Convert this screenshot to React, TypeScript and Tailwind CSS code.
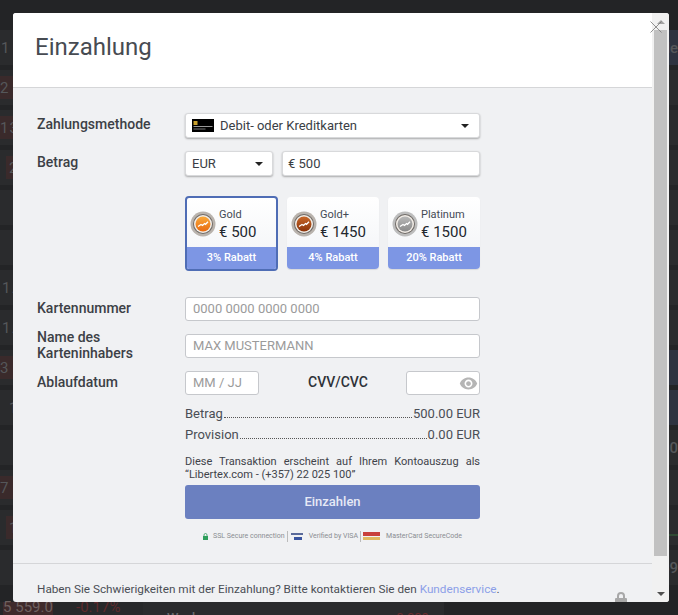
const backdropRows = [
  { left: '1 8', pl: 'pl-[1px]', red: false, right: 'bg-[#2e3340]', rightText: 'de' },
  { left: '2 1', pl: 'pl-0', red: true, right: 'bg-[#2a2b2d]', rightText: '' },
  { left: '13', pl: 'pl-0', red: true, right: 'bg-[#2a2b2d]', rightText: '' },
  { left: '2', pl: 'pl-[9px]', red: false, inset: true, right: 'bg-[#2a2b2d]', rightText: '' },
  { left: '', pl: '', red: false, right: 'bg-[#2a2b2d]', rightText: '' },
  { left: '', pl: '', red: false, right: 'bg-[#2a2b2d]', rightText: '' },
  { left: '1.', pl: 'pl-[2px]', red: false, right: 'bg-[#2a2b2d]', rightText: '' },
  { left: '1.', pl: 'pl-[2px]', red: false, right: 'bg-[#2a2b2d]', rightText: '' },
  { left: '3 6', pl: 'pl-0', red: true, right: 'bg-[#2e3340]', rightText: '' },
  { left: '1', pl: 'pl-[9px]', red: false, right: 'bg-[#2e3340]', rightText: '' },
  { left: '', pl: '', red: false, right: 'bg-[#2a2b2d]', rightText: '10' },
  { left: '7 2', pl: 'pl-0', red: true, right: 'bg-[#2a2b2d]', rightText: '' },
  { left: '1', pl: 'pl-[9px]', red: false, inset: true, right: 'bg-[#2a2b2d]', rightText: '' },
  { left: '', pl: '', red: false, right: 'bg-[#2a2b2d]', rightText: '59' },
]

function Medal({ id, from, to, ring }: { id: string; from: string; to: string; ring: string }) {
  return (
    <svg width="26" height="26" viewBox="0 0 26 26" className="shrink-0 mt-[3px]">
      <defs>
        <linearGradient id={id} x1="0" y1="0" x2="0" y2="1">
          <stop offset="0" stopColor={from} />
          <stop offset="1" stopColor={to} />
        </linearGradient>
      </defs>
      <circle cx="13" cy="13" r="12.5" fill={ring} />
      <circle cx="13" cy="13" r="10" fill="#6f6a66" />
      <circle cx="13" cy="13" r="9" fill="#f1ece6" />
      <circle cx="13" cy="13" r="7.5" fill={`url(#${id})`} />
      <path d="M8 15.5l3-2 1.5 1 2-2 1 .8 2.5-2.6" fill="none" stroke="#fff" strokeWidth="1.3" />
    </svg>
  )
}

function Card({ name, price, off, medal, selected }: {
  name: string; price: string; off: string
  medal: { id: string; from: string; to: string; ring: string }
  selected?: boolean
}) {
  return (
    <div className={`flex flex-col rounded-[4px] overflow-hidden bg-gradient-to-b from-white to-[#f1f3f6] ${
      selected ? 'w-[93px] h-[75px] border-2 border-[#4f6db5]' : 'w-[92px] h-[72px] mt-[1px] shadow-[0_1px_1px_rgba(0,0,0,0.1)]'
    }`}>
      <div className={`shrink-0 flex items-center gap-[3px] ${selected ? 'h-[49px] pl-[3px]' : 'h-[50px] pt-[1px] pl-[4px]'}`}>
        <Medal {...medal} />
        <div className="flex flex-col pt-[5px]">
          <span className="text-[11px] leading-[13px] text-[#444a55]">{name}</span>
          <span className="text-[15px] leading-[22px] text-[#23272e]">{price}</span>
        </div>
      </div>
      <div className="h-[22px] bg-[#7d96e4] text-white text-[11px] font-medium flex items-center justify-center">
        {off}
      </div>
    </div>
  )
}

function Field({ placeholder, className }: { placeholder: string; className?: string }) {
  return (
    <div className={`h-[24px] bg-white border border-[#c6c8cc] rounded-[3px] px-[7px] flex items-center text-[13px] text-[#9b9b9b] ${className ?? ''}`}>
      {placeholder}
    </div>
  )
}

function Caret() {
  return <span className="w-0 h-0 border-x-[4px] border-x-transparent border-t-[4px] border-t-[#222]" />
}

function Label({ children }: { children: React.ReactNode }) {
  return <div className="w-[150px] shrink-0 pl-[2px] pb-[2px] text-[14px] font-medium text-[#3c4046] leading-[16px]">{children}</div>
}

function LeaderRow({ label, value }: { label: string; value: string }) {
  return (
    <div className="flex items-baseline text-[13px] text-[#4a4e55] leading-[15px] h-[21px]">
      <span>{label}</span>
      <span className="flex-1 border-b border-dotted border-[#555] mx-[1px]" />
      <span>{value}</span>
    </div>
  )
}

export default function App() {
  return (
    <div className="relative w-[678px] h-[615px] overflow-hidden bg-[#232426] font-['Roboto',sans-serif]">
      {/* Trading page behind the dialog */}
      <div className="flex flex-col pt-[25px]">
        {backdropRows.map((r, i) => (
          <div key={i} className="flex justify-between h-[35px] mt-[5px] bg-[#2a2b2d] text-[15px] leading-[20px] text-[#55575a]">
            <div className={`w-[40px] py-[6px] ${r.inset ? 'pl-[6px]' : ''}`}>
              <div className={`h-[23px] flex items-center tracking-[1px] ${r.inset ? 'pl-[3px] bg-[#3a2a2b]' : r.pl} ${r.red ? 'bg-[#3a2a2b]' : ''}`}>
                {r.left}
              </div>
            </div>
            <div className={`w-[40px] flex justify-end pr-0 items-center font-medium ${r.right}`}>{r.rightText}</div>
          </div>
        ))}
      </div>
      <div className="absolute left-0 bottom-0 w-full h-[13px] flex bg-[#232426] text-[15px]">
        <div className="w-[143px] flex items-start bg-[#27282a] leading-[11px]">
          <span className="ml-[3px] w-[50px] h-[13px] bg-[#3f2a2b] text-[#6f6160] text-center">5 559.0</span>
          <span className="ml-[23px] text-[#5f2a2c]">-0.17%</span>
        </div>
        <div className="w-[301px] bg-[#2a2b2d] flex pl-[24px] text-[13px] font-medium leading-[15px] pt-[8px]">
          <span className="text-[#6a6c6f]">Wach</span>
          <span className="ml-[197px] text-[#6a2c2e] font-normal">0.009</span>
        </div>
      </div>
      <div className="absolute right-0 top-[534px] w-[9px] h-[2px] bg-[#2f4a33]" />

      {/* Dialog */}
      <div className="absolute left-[13px] top-[13px] w-[656px] h-[589px] rounded-[3px] overflow-hidden flex bg-[#f0f1f3]">
        <div className="w-[639px] shrink-0 flex flex-col">
          <div className="h-[75px] shrink-0 bg-white border-b border-[#d5d6d8] flex items-center pl-[22px] pb-[6px]">
            <h1 className="text-[24px] text-[#474b52] leading-[30px]">Einzahlung</h1>
          </div>

          <div className="pl-[22px] pt-[25px] flex flex-col">
            <div className="flex items-start">
              <Label><div className="pt-[3px]">Zahlungsmethode</div></Label>
              <div className="w-[295px] h-[25px] bg-white rounded-[3px] border border-[#d8d9db] shadow-[0_1px_2px_rgba(0,0,0,0.3)] flex items-center pl-[6px] pr-[10px] text-[13px] text-[#3a3e45]">
                <svg width="22" height="13" viewBox="0 0 22 13" className="mr-[6px]">
                  <rect width="22" height="13" fill="#000" />
                  <rect x="1.5" y="2" width="4" height="4" fill="#c9a02c" />
                  <rect x="1.5" y="7" width="19" height="1" fill="#999" />
                  <rect x="1.5" y="9.5" width="12" height="1" fill="#777" />
                </svg>
                <span className="flex-1">Debit- oder Kreditkarten</span>
                <Caret />
              </div>
            </div>

            <div className="flex items-start mt-[13px]">
              <Label><div className="pt-[3px]">Betrag</div></Label>
              <div className="w-[88px] h-[25px] bg-white rounded-[3px] border border-[#d8d9db] shadow-[0_1px_2px_rgba(0,0,0,0.3)] flex items-center justify-between pl-[6px] pr-[9px] text-[13px] text-[#3a3e45]">
                EUR
                <Caret />
              </div>
              <div className="ml-[9px] w-[198px] h-[25px] bg-white rounded-[3px] border border-[#d8d9db] shadow-[0_1px_2px_rgba(0,0,0,0.3)] flex items-center pl-[5px] text-[13px] text-[#3a3e45]">
                € 500
              </div>
            </div>

            <div className="flex ml-[150px] w-[295px] justify-between items-start mt-[20px]">
              <Card name="Gold" price="€ 500" off="3% Rabatt" selected medal={{ id: 'm1', from: '#f9a93a', to: '#e86a10', ring: '#b9b3ad' }} />
              <Card name="Gold+" price="€ 1450" off="4% Rabatt" medal={{ id: 'm2', from: '#c8682a', to: '#8a3208', ring: '#b9b3ad' }} />
              <Card name="Platinum" price="€ 1500" off="20% Rabatt" medal={{ id: 'm3', from: '#b8b8b8', to: '#8a8a8a', ring: '#bdbdbd' }} />
            </div>

            <div className="flex items-center h-[24px] mt-[26px]">
              <Label>Kartennummer</Label>
              <Field placeholder="0000 0000 0000 0000" className="w-[295px]" />
            </div>
            <div className="flex items-center h-[24px] mt-[13px]">
              <Label>Name des Karteninhabers</Label>
              <Field placeholder="MAX MUSTERMANN" className="w-[295px]" />
            </div>
            <div className="flex items-center h-[24px] mt-[13px]">
              <Label>Ablaufdatum</Label>
              <Field placeholder="MM / JJ" className="w-[74px]" />
              <div className="w-[147px] pl-[11px] pb-[2px] text-center text-[14px] font-medium text-[#2e3238]">CVV/CVC</div>
              <div className="w-[74px] h-[24px] bg-white border border-[#c6c8cc] rounded-[3px] flex items-center justify-end pr-[1px]">
                <svg width="19" height="19" viewBox="0 0 24 24" fill="#b5b5b5">
                  <path d="M12 4.5C7 4.5 2.73 7.61 1 12c1.73 4.39 6 7.5 11 7.5s9.27-3.11 11-7.5c-1.73-4.39-6-7.5-11-7.5zM12 17c-2.76 0-5-2.24-5-5s2.24-5 5-5 5 2.24 5 5-2.24 5-5 5zm0-8c-1.66 0-3 1.34-3 3s1.34 3 3 3 3-1.34 3-3-1.34-3-3-3z" />
                </svg>
              </div>
            </div>

            <div className="ml-[150px] w-[295px] mt-[11px]">
              <LeaderRow label="Betrag" value="500.00 EUR" />
              <LeaderRow label="Provision" value="0.00 EUR" />
              <p className="mt-[7px] text-[11px] leading-[13px] text-[#3f434a] text-justify [text-align-last:justify]">
                Diese Transaktion erscheint auf Ihrem Kontoauszug als
              </p>
              <p className="text-[11px] leading-[13px] text-[#3f434a]">“Libertex.com - (+357) 22 025 100”</p>
              <div className="mt-[4px] h-[34px] rounded-[3px] bg-[#6b80c0] text-[#e6e9f5] text-[13px] font-medium flex items-center justify-center">
                Einzahlen
              </div>
              <div className="mt-[11px] flex items-center justify-center text-[7px] text-[#8a8d92] h-[12px]">
                <svg width="5" height="7" viewBox="0 0 5 7" className="mr-[5px]">
                  <path d="M1 3V2a1.5 1.5 0 0 1 3 0v1" fill="none" stroke="#2e9e5b" strokeWidth="0.8" />
                  <rect x="0" y="3" width="5" height="4" fill="#2e9e5b" />
                </svg>
                <span>SSL Secure connection</span>
                <span className="w-px h-[11px] bg-[#bbb] mx-[2px]" />
                <svg width="14" height="7" viewBox="0 0 14 7" className="mr-[5px]">
                  <rect x="1" y="0" width="12" height="2" fill="#5a6a9a" />
                  <rect x="4" y="4" width="8" height="3" fill="#3a55a0" />
                </svg>
                <span>Verified by VISA</span>
                <span className="w-px h-[11px] bg-[#bbb] mx-[2px]" />
                <svg width="17" height="8" viewBox="0 0 17 8" className="mr-[6px]">
                  <rect x="0" y="0" width="17" height="4" fill="#c8403c" />
                  <rect x="0" y="5" width="17" height="3" fill="#e0b860" />
                </svg>
                <span>MasterCard SecureCode</span>
              </div>
            </div>
          </div>

          <div className="mt-auto h-[39px] border-t border-[#d5d6d8] pl-[24px] pt-[18px] relative text-[11.75px] leading-[14px] text-[#4a4e55]">
            Haben Sie Schwierigkeiten mit der Einzahlung? Bitte kontaktieren Sie den <span className="text-[#8c9fe8]">Kundenservice</span>.
            <svg width="12" height="14" viewBox="0 0 12 14" className="absolute left-[602px] top-[28px]">
              <path d="M3 6V4a3 3 0 0 1 6 0v2" fill="none" stroke="#a8a8a8" strokeWidth="2" />
              <rect x="0" y="6" width="12" height="8" rx="1" fill="#a8a8a8" />
            </svg>
          </div>
        </div>

        <div className="w-[17px] shrink-0 bg-[#f1f1f1] flex flex-col items-center">
          <div className="h-[17px] flex items-center justify-center">
            <span className="w-0 h-0 border-x-[4px] border-x-transparent border-b-[4px] border-b-[#a3a3a3]" />
          </div>
          <div className="w-[13px] h-[526px] bg-[#c1c1c1]" />
          <div className="mt-auto h-[17px] flex items-center justify-center">
            <span className="w-0 h-0 border-x-[4px] border-x-transparent border-t-[4px] border-t-[#505050]" />
          </div>
        </div>

        <svg width="12" height="12" viewBox="0 0 12 12" className="absolute left-[637px] top-[8px]">
          <path d="M0.5 0.5l11 11M11.5 0.5l-11 11" stroke="#777" strokeWidth="0.8" fill="none" />
        </svg>
      </div>
    </div>
  )
}
